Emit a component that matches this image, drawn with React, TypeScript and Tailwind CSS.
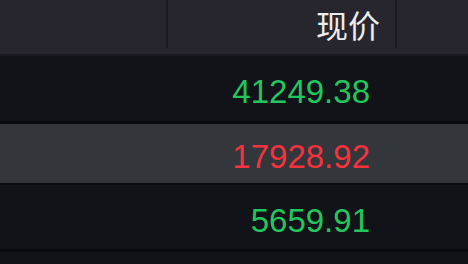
import React from "react";

const rows = [
  { v: "41249.38", color: "text-[#22c55e]", bg: "bg-[#111318]", h: "h-[65px]", b: "border-b-[3px]", pt: "pt-[5px]" },
  { v: "17928.92", color: "text-[#f5323e]", bg: "bg-[#33363b]", h: "h-[59px]", b: "border-b-2", pt: "pt-[5px]" },
  { v: "5659.91", color: "text-[#22c55e]", bg: "bg-[#111318]", h: "h-[64px]", b: "border-b-[3px]", pt: "pt-[6px]" },
];

export default function App() {
  return (
    <div
      className="w-[468px] h-[264px] overflow-hidden bg-[#111318]"
      style={{ fontFamily: '"Liberation Sans", Arial, "Noto Sans CJK SC", sans-serif' }}
    >
      <div className="flex h-[56px] bg-[#27262f] border-b-2 border-[#1a1a20]">
        <div className="w-[168px] h-[48px] border-r-2 border-[#1d1c24]" />
        <div className="w-[229px] h-[48px] border-r-2 border-[#1d1c24] flex items-center justify-end pr-[15px]">
          <span
            className="text-[32px] leading-none text-[#ececec]"
            style={{ fontFamily: '"Noto Sans CJK SC", sans-serif' }}
          >
            现价
          </span>
        </div>
        <div className="flex-1" />
      </div>
      {rows.map((r) => (
        <div key={r.v} className={`flex ${r.h} ${r.bg} ${r.b} border-[#0a0b0e] box-content`}>
          <div className="w-[168px]" />
          <div className={`w-[229px] flex items-center justify-end pr-[27px] ${r.pt}`}>
            <span className={`text-[33px] leading-none ${r.color}`}>{r.v}</span>
          </div>
          <div className="flex-1" />
        </div>
      ))}
    </div>
  );
}
